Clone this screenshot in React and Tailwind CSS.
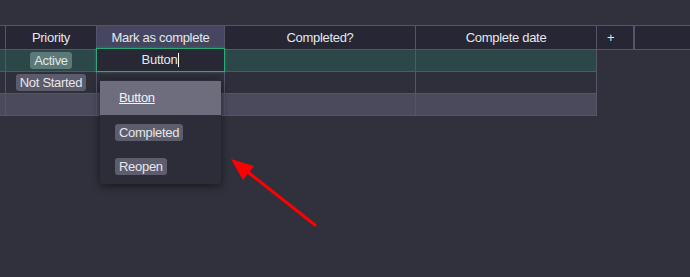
export default function App() {
  const font = { fontFamily: '"Liberation Sans", Arial, sans-serif' };
  return (
    <div className="relative h-[277px] w-[690px] overflow-hidden bg-[#31313d] text-[13px] tracking-[-0.3px] text-[#e6e6ea]" style={font}>
      <div className="h-[25px]" />
      {/* header */}
      <div className="flex h-[25px] border-y border-[#55556a] bg-[#262635]">
        <div className="w-[6px] shrink-0 border-r border-[#55556a]" />
        <div className="flex w-[91px] shrink-0 items-center justify-center border-r border-[#55556a]">Priority</div>
        <div className="flex w-[128px] shrink-0 items-center justify-center border-r border-[#55556a] bg-[#464660]">Mark as complete</div>
        <div className="flex w-[191px] shrink-0 items-center justify-center border-r border-[#55556a]">Completed?</div>
        <div className="flex w-[181px] shrink-0 items-center justify-center border-r border-[#55556a]">Complete date</div>
        <div className="flex w-[38px] shrink-0 items-center border-r-2 border-[#55556a] pl-[10px]">+</div>
        <div className="flex-1" />
      </div>
      {/* body */}
      <div className="w-[597px]">
        <div className="flex h-[22px] border-b border-r border-[#55556a] bg-[#2c4747]">
          <div className="w-[6px] shrink-0 border-r border-[#55556a]" />
          <div className="flex w-[91px] shrink-0 items-center justify-center border-r border-[#55556a]">
            <span className="rounded-[3px] bg-[#5d7977] px-[4px] leading-[17px] text-[#dfe7e6]">Active</span>
          </div>
          <div className="w-[128px] shrink-0 border-r border-[#55556a]" />
          <div className="w-[191px] shrink-0 border-r border-[#55556a]" />
          <div className="flex-1" />
        </div>
        <div className="flex h-[22px] border-b border-r border-[#55556a] bg-[#2f2f3b]">
          <div className="w-[6px] shrink-0 border-r border-[#55556a]" />
          <div className="flex w-[91px] shrink-0 items-center justify-center border-r border-[#55556a]">
            <span className="rounded-[3px] bg-[#5b5b6b] px-[4px] leading-[17px] text-[#e6e6ea]">Not Started</span>
          </div>
          <div className="w-[128px] shrink-0 border-r border-[#55556a]" />
          <div className="w-[191px] shrink-0 border-r border-[#55556a]" />
          <div className="flex-1" />
        </div>
        <div className="flex h-[22px] border-b border-r border-[#55556a] bg-[#4a4a5c]">
          <div className="w-[6px] shrink-0 border-r border-[#55556a]" />
          <div className="w-[91px] shrink-0 border-r border-[#55556a]" />
          <div className="w-[128px] shrink-0 border-r border-[#55556a]" />
          <div className="w-[191px] shrink-0 border-r border-[#55556a]" />
          <div className="flex-1" />
        </div>
      </div>

      {/* cell editor */}
      <div className="absolute left-[96px] top-[48px] flex h-[24px] w-[129px] items-center justify-center border border-[#2fa878] bg-[#282835] shadow-[0_0_3px_rgba(47,168,120,0.5)]">
        <span>Button</span>
        <span className="ml-[1px] inline-block h-[14px] w-[1px] bg-white" />
      </div>

      {/* dropdown */}
      <div className="absolute left-[100px] top-[80px] w-[121px] rounded-[3px] bg-[#2d2d39] py-[1px] shadow-[0_2px_8px_rgba(0,0,0,0.55)]">
        <div className="flex h-[34px] items-center bg-[#6d6d7d] pl-[19px]">
          <span className="text-[#f2f2f4] underline">Button</span>
        </div>
        <div className="flex h-[34px] items-center pl-[15px]">
          <span className="rounded-[3px] bg-[#5d5d6e] px-[4px] leading-[17px]">Completed</span>
        </div>
        <div className="flex h-[34px] items-center pl-[15px]">
          <span className="rounded-[3px] bg-[#5d5d6e] px-[4px] leading-[17px]">Reopen</span>
        </div>
      </div>

      {/* red arrow */}
      <svg className="absolute left-0 top-0" width="690" height="277" viewBox="0 0 690 277">
        <line x1="315" y1="225" x2="244" y2="169" stroke="#ff0000" strokeWidth="3" strokeLinecap="round" />
        <polygon points="231,159 254,166 243,180" fill="#ff0000" />
      </svg>
    </div>
  );
}
